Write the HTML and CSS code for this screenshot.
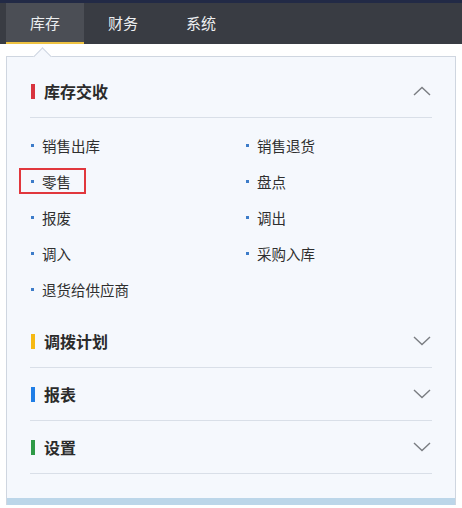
FILE: index.html
```html
<!DOCTYPE html>
<html lang="zh-CN">
<head>
  <meta charset="UTF-8">
  <meta name="viewport" content="width=device-width, initial-scale=1.0">
  <title>库存</title>
  <link rel="stylesheet" href="styles.css">
</head>
<body>
  <div class="topbar">
    <a class="tab active">库存</a>
    <a class="tab">财务</a>
    <a class="tab">系统</a>
  </div>

  <div class="panel">
    <div class="section">
      <div class="sec-head">
        <span class="mark red"></span>
        <span class="sec-title">库存交收</span>
        <svg class="chev" width="18" height="10" viewBox="0 0 18 10"><path d="M1 9 L9 1.5 L17 9" fill="none" stroke="#7a7d82" stroke-width="1.4"/></svg>
      </div>
      <ul class="items">
        <li>销售出库</li>
        <li>销售退货</li>
        <li class="picked">零售</li>
        <li>盘点</li>
        <li>报废</li>
        <li>调出</li>
        <li>调入</li>
        <li>采购入库</li>
        <li>退货给供应商</li>
      </ul>
    </div>
    <div class="section">
      <div class="sec-head">
        <span class="mark yellow"></span>
        <span class="sec-title">调拨计划</span>
        <svg class="chev" width="18" height="10" viewBox="0 0 18 10"><path d="M1 1 L9 8.5 L17 1" fill="none" stroke="#7a7d82" stroke-width="1.4"/></svg>
      </div>
    </div>
    <div class="section">
      <div class="sec-head">
        <span class="mark blue"></span>
        <span class="sec-title">报表</span>
        <svg class="chev" width="18" height="10" viewBox="0 0 18 10"><path d="M1 1 L9 8.5 L17 1" fill="none" stroke="#7a7d82" stroke-width="1.4"/></svg>
      </div>
    </div>
    <div class="section">
      <div class="sec-head">
        <span class="mark green"></span>
        <span class="sec-title">设置</span>
        <svg class="chev" width="18" height="10" viewBox="0 0 18 10"><path d="M1 1 L9 8.5 L17 1" fill="none" stroke="#7a7d82" stroke-width="1.4"/></svg>
      </div>
    </div>
    <div class="panel-foot"></div>
  </div>
</body>
</html>
```

FILE: styles.css
```css
body {
  margin: 0;
  background: #fff;
  font-family: "Noto Sans CJK SC", "Noto Sans", sans-serif;
  color: #333;
}
.topbar {
  display: flex;
  height: 41px;
  padding-left: 6px;
  background: #393c43;
  border-top: 3px solid #222a46;
}
.tab {
  width: 78px;
  display: flex;
  align-items: center;
  justify-content: center;
  font-size: 15px;
  color: #eceef0;
  box-sizing: border-box;
  border-bottom: 2px solid transparent;
}
.tab.active {
  background: #4b4e55;
  border-bottom-color: #eec241;
}
.panel {
  position: relative;
  width: 450px;
  margin: 12px 0 0 6px;
  box-sizing: border-box;
  background: #f5f8fd;
  border: 1px solid #cfd6e0;
  border-bottom: none;
  padding: 8px 23px 0 23px;
}
.panel::before {
  content: "";
  position: absolute;
  left: 29px;
  top: -7px;
  width: 12px;
  height: 12px;
  background: #f5f8fd;
  border-top: 1px solid #cfd6e0;
  border-left: 1px solid #cfd6e0;
  transform: rotate(45deg);
}
.sec-head {
  display: flex;
  align-items: center;
  height: 52px;
  border-bottom: 1px solid #d9dfe8;
}
.mark {
  width: 4px;
  height: 15px;
  margin: 0 9px 0 1px;
}
.mark.red { background: #d8343f; }
.mark.yellow { background: #f6b913; }
.mark.blue { background: #1f7ee6; }
.mark.green { background: #2e9a47; }
.sec-title {
  flex: 1;
  font-size: 16px;
  font-weight: bold;
  color: #2b2b2b;
}
.chev {
  margin-right: 1px;
}
.items {
  list-style: none;
  margin: 0;
  padding: 9px 0 8px;
  display: grid;
  grid-template-columns: 215px 1fr;
}
.items li {
  position: relative;
  height: 36px;
  display: flex;
  align-items: center;
  font-size: 14.5px;
  color: #2f2f2f;
}
.items li::before {
  content: "";
  width: 3px;
  height: 3px;
  margin: 1px 8px 0 1px;
  background: #3d7cc9;
}
.items li.picked::after {
  content: "";
  position: absolute;
  left: -11px;
  top: 5px;
  width: 67px;
  height: 26px;
  box-sizing: border-box;
  border: 2px solid #e1373d;
}
.panel-foot {
  height: 7px;
  margin: 24px -23px 0;
  background: #bcd6e9;
}
```
